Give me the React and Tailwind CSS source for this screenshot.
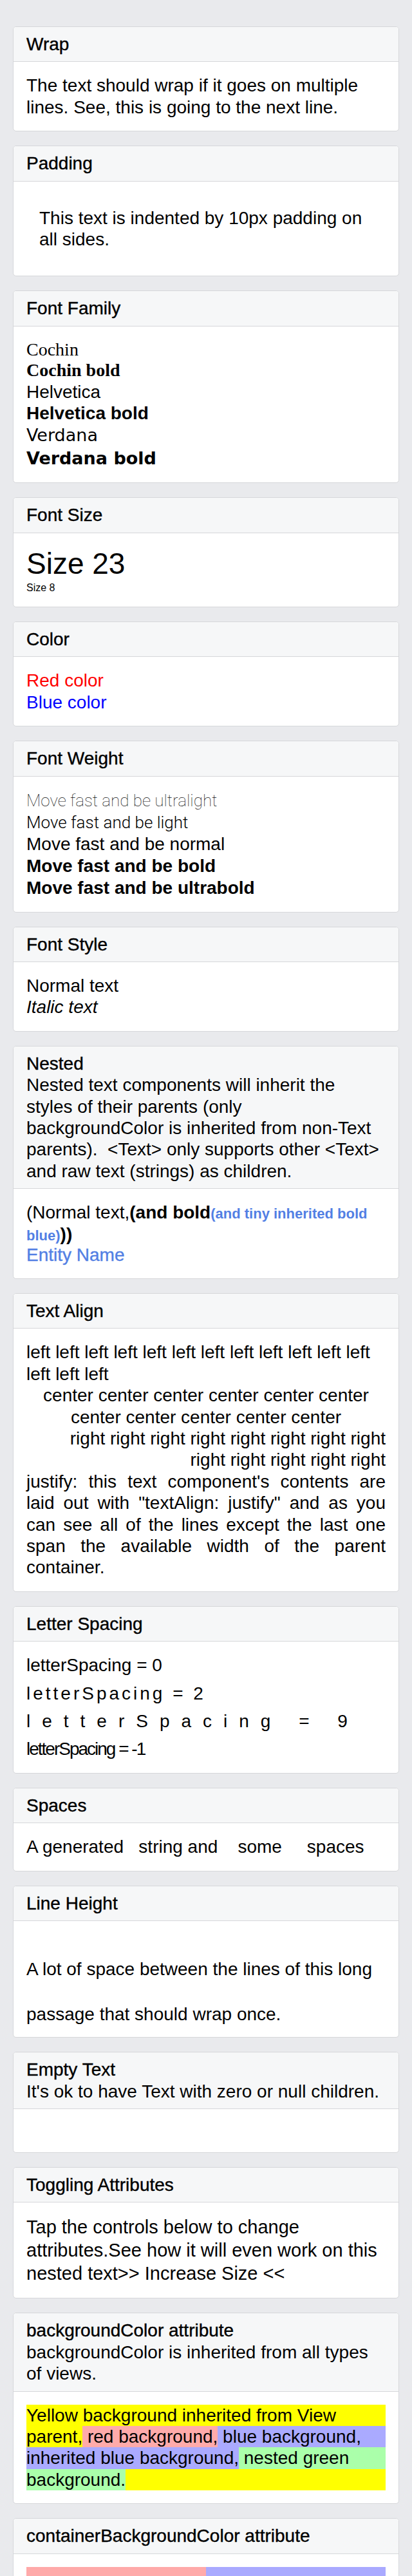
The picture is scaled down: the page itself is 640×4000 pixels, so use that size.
import React from "react";

function Card({ title, desc, children, bodyClass = "p-[20px]" }) {
  return (
    <div className="mx-[20px] overflow-hidden rounded-[5px] border border-[#d6d7da] bg-white">
      <div className="border-b border-[#d6d7da] bg-[#f6f7f8] px-[20px] py-[10px]">
        <div className="font-medium [-webkit-text-stroke:0.4px_#000]">{title}</div>
        {desc ? <div>{desc}</div> : null}
      </div>
      <div className={bodyClass}>{children}</div>
    </div>
  );
}

export default function App() {
  return (
    <div className="min-h-[4000px] bg-[#e9eaed] pt-[41px] pb-[40px] font-['Liberation_Sans',Arial,sans-serif] text-[28px] leading-[33.4px] text-black">
      <div className="flex flex-col gap-[22px]">
        <Card title="Wrap">
          <p>The text should wrap if it goes on multiple lines. See, this is going to the next line.</p>
        </Card>

        <Card title="Padding" bodyClass="p-[40px]">
          <p>This text is indented by 10px padding on all sides.</p>
        </Card>

        <Card title="Font Family">
          <div className="font-['Liberation_Serif',serif] leading-[32.4px]">Cochin</div>
          <div className="font-['Liberation_Serif',serif] font-bold leading-[32.4px]">Cochin bold</div>
          <div>Helvetica</div>
          <div className="font-bold">Helvetica bold</div>
          <div className="font-['DejaVu_Sans',sans-serif] text-[27px] leading-[35.5px]">Verdana</div>
          <div className="font-['DejaVu_Sans',sans-serif] text-[27px] font-bold leading-[35.5px]">Verdana bold</div>
        </Card>

        <Card title="Font Size">
          <div className="text-[46px] leading-[55px]">Size 23</div>
          <div className="text-[16px] leading-[19px]">Size 8</div>
        </Card>

        <Card title="Color">
          <div className="text-[#ff0000]">Red color</div>
          <div className="text-[#0000ff]">Blue color</div>
        </Card>

        <Card title="Font Weight">
          <div className="leading-[34px]">
            <div className="font-['Roboto',sans-serif] text-[26px] font-thin text-[#111]">Move fast and be ultralight</div>
            <div className="font-['Roboto',sans-serif] text-[26px] font-light">Move fast and be light</div>
            <div>Move fast and be normal</div>
            <div className="font-bold">Move fast and be bold</div>
            <div className="font-black">Move fast and be ultrabold</div>
          </div>
        </Card>

        <Card title="Font Style">
          <div>Normal text</div>
          <div className="italic">Italic text</div>
        </Card>

        <Card
          title="Nested"
          desc={
            <>
              Nested text components will inherit the
              <br />
              styles of their parents (only
              <br />
              backgroundColor is inherited from non-Text
              <br />
              <span className="whitespace-pre">parents).  &lt;Text&gt; only supports other &lt;Text&gt;</span>
              <br />
              and raw text (strings) as children.
            </>
          }
        >
          <div className="flex items-baseline whitespace-pre">
            <span>(Normal text,</span>
            <span className="font-bold">(and bold</span>
            <span className="text-[22px] font-bold leading-none text-[#527fe4]">(and tiny inherited bold</span>
          </div>
          <div className="flex items-baseline">
            <span className="text-[22px] font-bold leading-none text-[#527fe4]">blue)</span>
            <span className="font-bold">))</span>
          </div>
          <div className="font-medium leading-[32px] text-[#527fe4] [-webkit-text-stroke:0.4px_#527fe4]">Entity Name</div>
        </Card>

        <Card title="Text Align">
          <div>left left left left left left left left left left left left left left left</div>
          <div className="text-center">center center center center center center center center center center center</div>
          <div className="text-right">
            right right right right right right right right
            <br />
            right right right right right
          </div>
          <div className="text-justify">
            justify: this text component's contents are laid out with "textAlign: justify" and as you can see all of the lines except the last one span the available width of the parent container.
          </div>
        </Card>

        <Card title="Letter Spacing">
          <div className="whitespace-nowrap">letterSpacing = 0</div>
          <div className="mt-[10px] whitespace-nowrap tracking-[4px]">letterSpacing = 2</div>
          <div className="mt-[10px] whitespace-nowrap tracking-[18px]">letterSpacing = 9</div>
          <div className="mt-[10px] whitespace-nowrap tracking-[-2px]">letterSpacing = -1</div>
        </Card>

        <Card title="Spaces">
          <div className="whitespace-pre">A generated   string and    some     spaces</div>
        </Card>

        <Card title="Line Height" bodyClass="px-[20px] pt-[40px]">
          <p className="leading-[70px]">A lot of space between the lines of this long passage that should wrap once.</p>
        </Card>

        <Card title="Empty Text" desc="It's ok to have Text with zero or null children.">
          <div className="h-[27px]" />
        </Card>

        <Card title="Toggling Attributes">
          <p className="text-[29px] leading-[36px]">
            Tap the controls below to change
            <br />
            attributes.See how it will even work on this
            <br />
            nested text&gt;&gt; Increase Size &lt;&lt;
          </p>
        </Card>

        <Card
          title="backgroundColor attribute"
          desc={
            <>
              backgroundColor is inherited from all types
              <br />
              of views.
            </>
          }
        >
          <div className="bg-[#ffff00]">
            <div>Yellow background inherited from View</div>
            <div className="flex">
              <span>parent,</span>
              <span className="whitespace-pre bg-[#ffaaaa]"> red background,</span>
              <span className="flex-1 whitespace-pre bg-[#aaaaff]"> blue background,</span>
            </div>
            <div className="flex">
              <span className="bg-[#aaaaff]">inherited blue background,</span>
              <span className="flex-1 whitespace-pre bg-[#aaffaa]"> nested green</span>
            </div>
            <div className="flex">
              <span className="bg-[#aaffaa]">background.</span>
            </div>
          </div>
        </Card>

        <Card title="containerBackgroundColor attribute">
          <div className="flex h-[60px]">
            <div className="flex-1 bg-[#ffaaaa]" />
            <div className="flex-1 bg-[#aaaaff]" />
          </div>
        </Card>
      </div>
    </div>
  );
}
